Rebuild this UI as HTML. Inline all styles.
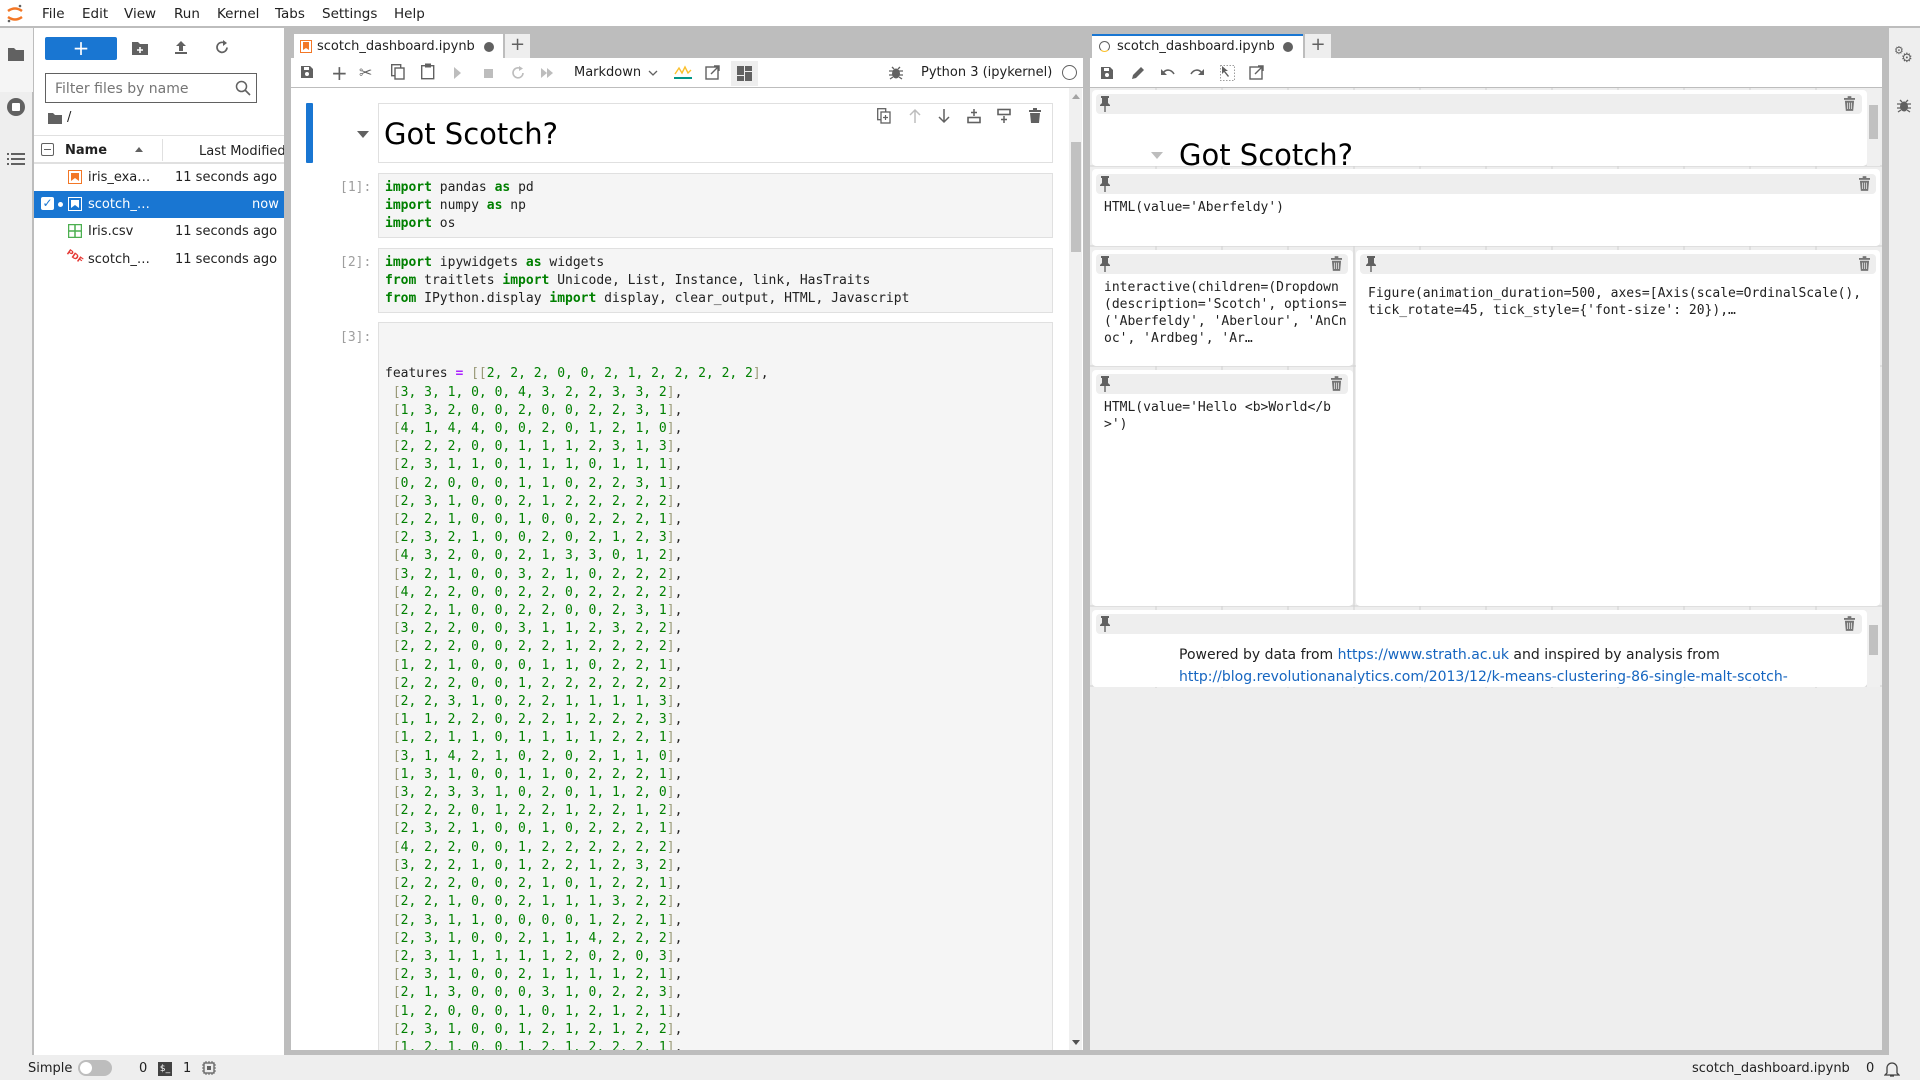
<!DOCTYPE html>
<html><head><meta charset="utf-8">
<style>
*{box-sizing:border-box;margin:0;padding:0}
body{width:1920px;height:1080px;overflow:hidden;background:#bdbdbd;font-family:"DejaVu Sans","Liberation Sans",sans-serif;font-size:13px;color:#212121;position:relative}
.a{position:absolute}
.mono{font-family:"DejaVu Sans Mono","Liberation Mono",monospace}
.menu{left:0;top:0;width:1920px;height:27px;background:#fff;border-bottom:1px solid #bdbdbd}
.menu span{position:absolute;top:6px;font-size:13.5px}
.k{color:#008000;font-weight:bold}
.n{color:#008000}
.b{color:#999977}
.p{color:#aa22ff;font-weight:bold}
.code{font-size:13px;line-height:18.2px;white-space:pre}
.cell{background:#f5f5f5;border:1px solid #e0e0e0}
.prompt{color:#9e9e9e;font-size:13px}
.card{background:#fff;border-radius:4px}
.hdr{background:#eeeeee;border-radius:4px;height:20px}
.ico{position:absolute}
.t{font-size:13px}
</style></head><body>

<div class="a menu">
 <svg class="ico" style="left:5px;top:3px" width="20" height="21" viewBox="0 0 20 21"><path d="M3 8 Q10 3 17 8" stroke="#f37726" stroke-width="2.5" fill="none"/><path d="M3 14 Q10 19 17 14" stroke="#f37726" stroke-width="2.5" fill="none"/><circle cx="15" cy="3" r="1.3" fill="#616161"/><circle cx="4" cy="18" r="1.3" fill="#616161"/></svg>
 <span style="left:42px">File</span><span style="left:82px">Edit</span><span style="left:124px">View</span><span style="left:174px">Run</span><span style="left:217px">Kernel</span><span style="left:275px">Tabs</span><span style="left:322px">Settings</span><span style="left:394px">Help</span>
</div>

<div class="a" style="left:0;top:28px;width:33px;height:1027px;background:#eeeeee;border-right:1px solid #bdbdbd"></div>
<div class="a" style="left:0;top:28px;width:33px;height:64px;background:#f5f5f5"></div>
<svg class="ico" style="left:7px;top:46px" width="18" height="16"><path d="M1 2h6l2 2h8v11H1z" fill="#616161"/></svg>
<svg class="ico" style="left:6px;top:97px" width="20" height="20"><circle cx="10" cy="10" r="9" fill="#616161"/><rect x="6" y="6" width="8" height="8" rx="1" fill="#fff"/></svg>
<svg class="ico" style="left:7px;top:152px" width="18" height="15"><g fill="#616161"><rect x="0" y="1" width="2" height="2"/><rect x="4" y="1" width="14" height="2"/><rect x="0" y="6" width="2" height="2"/><rect x="4" y="6" width="14" height="2"/><rect x="0" y="11" width="2" height="2"/><rect x="4" y="11" width="14" height="2"/></g></svg>

<div class="a" style="left:34px;top:28px;width:250px;height:1027px;background:#fff"></div>
<div class="a" style="left:45px;top:37px;width:72px;height:23px;background:#1976d2;border-radius:2px;color:#fff;text-align:center;font-size:20px;line-height:22px">+</div>
<svg class="ico" style="left:132px;top:41px" width="16" height="14"><path d="M0 1h6l2 2h8v11H0z" fill="#616161"/><path d="M8 6v6M5 9h6" stroke="#fff" stroke-width="1.6"/></svg>
<svg class="ico" style="left:174px;top:40px" width="14" height="15"><path d="M7 1L2 6h3v5h4V6h3z" fill="#616161"/><rect x="1" y="12" width="12" height="2" fill="#616161"/></svg>
<svg class="ico" style="left:215px;top:40px" width="15" height="15"><path d="M12 7.5A5 5 0 1 1 9.5 3" stroke="#616161" stroke-width="1.7" fill="none"/><path d="M8 0l4 3-4 3z" fill="#616161"/></svg>
<div class="a" style="left:45px;top:73px;width:212px;height:30px;border:1px solid #616161;background:#fff"></div>
<div class="a" style="left:55px;top:81px;color:#757575;font-size:14px">Filter files by name</div>
<svg class="ico" style="left:235px;top:80px" width="16" height="16"><circle cx="6.5" cy="6.5" r="5" stroke="#616161" stroke-width="1.5" fill="none"/><path d="M10 10l5 5" stroke="#616161" stroke-width="1.6"/></svg>
<svg class="ico" style="left:48px;top:112px" width="14" height="12"><path d="M0 1h5l2 2h7v9H0z" fill="#616161"/></svg>
<div class="a" style="left:67px;top:110px;font-size:13px">/</div>
<div class="a" style="left:34px;top:135px;width:250px;height:29px;border-top:1px solid #e0e0e0;border-bottom:2px solid #e0e0e0"></div>
<div class="a" style="left:41px;top:143px;width:13px;height:13px;border:1px solid #616161;border-radius:2px"></div>
<div class="a" style="left:44px;top:149px;width:7px;height:1px;background:#616161"></div>
<div class="a t" style="left:65px;top:143px;font-weight:bold">Name</div>
<div class="a" style="left:135px;top:147px;width:0;height:0;border-left:4px solid transparent;border-right:4px solid transparent;border-bottom:5px solid #616161"></div>
<div class="a" style="left:162px;top:139px;width:1px;height:22px;background:#e0e0e0"></div>
<div class="a t" style="left:199px;top:144px;white-space:nowrap;width:85px;overflow:hidden">Last Modified</div>
<div class="a" style="left:34px;top:191px;width:250px;height:27px;background:#1976d2"></div>
<svg class="ico" style="left:68px;top:170px" width="14" height="14"><rect x="0.5" y="0.5" width="13" height="13" fill="none" stroke="#f37726"/><path d="M3 3h8v8l-4-3-4 3z" fill="#f37726"/></svg>
<div class="a t" style="left:88px;top:170px">iris_exa…</div><div class="a t" style="left:175px;top:170px">11 seconds ago</div>
<div class="a" style="left:41px;top:197px;width:13px;height:13px;background:#fff;border-radius:2px;color:#1976d2;font-size:12px;line-height:13px;text-align:center;font-weight:bold">✓</div>
<div class="a" style="left:58px;top:202px;width:5px;height:5px;border-radius:50%;background:#fff"></div>
<svg class="ico" style="left:68px;top:197px" width="14" height="14"><rect x="0.5" y="0.5" width="13" height="13" fill="none" stroke="#fff"/><path d="M3 3h8v8l-4-3-4 3z" fill="#fff"/></svg>
<div class="a t" style="left:88px;top:197px;color:#fff">scotch_…</div><div class="a t" style="left:252px;top:197px;color:#fff">now</div>
<svg class="ico" style="left:68px;top:224px" width="14" height="14"><rect x="0.5" y="0.5" width="13" height="13" fill="none" stroke="#4caf50" stroke-width="1.5"/><path d="M7 0v14M0 7h14" stroke="#4caf50" stroke-width="1.5"/></svg>
<div class="a t" style="left:88px;top:224px">Iris.csv</div><div class="a t" style="left:175px;top:224px">11 seconds ago</div>
<div class="a" style="left:66px;top:252px;font-size:8px;color:#e53935;font-weight:bold;transform:rotate(35deg)">PDF</div>
<div class="a t" style="left:88px;top:252px">scotch_…</div><div class="a t" style="left:175px;top:252px">11 seconds ago</div>

<!-- notebook panel -->
<div class="a" style="left:291px;top:34px;width:792px;height:1016px;background:#fff"></div>
<div class="a" style="left:291px;top:27px;width:792px;height:31px;background:#bdbdbd"></div>
<div class="a" style="left:294px;top:34px;width:209px;height:25px;background:#fff"></div>
<svg class="ico" style="left:300px;top:40px" width="12" height="13"><rect x="0.5" y="0.5" width="11" height="12" fill="none" stroke="#f37726"/><path d="M3 2h6v8l-3-2-3 2z" fill="#f37726"/></svg>
<div class="a t" style="left:317px;top:39px">scotch_dashboard.ipynb</div>
<div class="a" style="left:484px;top:42px;width:10px;height:10px;border-radius:50%;background:#616161"></div>
<div class="a" style="left:505px;top:34px;width:25px;height:24px;background:#eeeeee;color:#616161;font-size:18px;text-align:center;line-height:22px">+</div>
<div class="a" style="left:291px;top:58px;width:792px;height:30px;background:#fff;border-bottom:1px solid #bdbdbd"></div>
<svg class="ico" style="left:300px;top:65px" width="14" height="14"><path d="M1 1h9l3 3v9H1z" fill="#616161"/><rect x="4" y="2" width="5" height="3" fill="#fff"/><circle cx="7" cy="9" r="2" fill="#fff"/></svg>
<div class="a" style="left:331px;top:61px;font-size:20px;color:#616161">+</div>
<div class="a" style="left:359px;top:63px;font-size:16px;color:#616161">✂</div>
<svg class="ico" style="left:391px;top:64px" width="14" height="16"><rect x="0.7" y="0.7" width="9" height="11" fill="none" stroke="#616161" stroke-width="1.4"/><rect x="4" y="4" width="9" height="11" fill="#fff" stroke="#616161" stroke-width="1.4"/></svg>
<svg class="ico" style="left:421px;top:63px" width="14" height="17"><rect x="0.7" y="2.7" width="12" height="13" fill="none" stroke="#616161" stroke-width="1.4"/><rect x="4" y="0.5" width="6" height="4" fill="#616161"/></svg>
<div class="a" style="left:454px;top:67px;width:0;height:0;border-top:6px solid transparent;border-bottom:6px solid transparent;border-left:7px solid #bdbdbd"></div>
<div class="a" style="left:484px;top:69px;width:9px;height:9px;background:#bdbdbd"></div>
<svg class="ico" style="left:511px;top:66px" width="14" height="14"><path d="M12 7A5 5 0 1 1 9.5 2.5" stroke="#bdbdbd" stroke-width="1.6" fill="none"/><path d="M8 0l4 2.5-4 2.5z" fill="#bdbdbd"/></svg>
<div class="a" style="left:541px;top:68px;width:0;height:0;border-top:5px solid transparent;border-bottom:5px solid transparent;border-left:6px solid #bdbdbd"></div>
<div class="a" style="left:547px;top:68px;width:0;height:0;border-top:5px solid transparent;border-bottom:5px solid transparent;border-left:6px solid #bdbdbd"></div>
<div class="a t" style="left:574px;top:65px">Markdown</div>
<svg class="ico" style="left:648px;top:70px" width="10" height="7"><path d="M1 1l4 4 4-4" stroke="#616161" stroke-width="1.3" fill="none"/></svg>
<svg class="ico" style="left:674px;top:64px" width="18" height="16"><path d="M1 10l4-6 3 5 3-6 3 6 3-3" stroke="#fbc02d" stroke-width="1.4" fill="none"/><rect x="0" y="13" width="18" height="2" fill="#009688"/></svg>
<svg class="ico" style="left:705px;top:65px" width="15" height="15"><rect x="1" y="2" width="12" height="12" fill="none" stroke="#616161" stroke-width="1.4"/><path d="M6 9l8-8M9 1h5v5" stroke="#616161" stroke-width="1.4" fill="none"/></svg>
<div class="a" style="left:731px;top:61px;width:27px;height:25px;background:#eeeeee"></div>
<svg class="ico" style="left:737px;top:66px" width="15" height="15"><rect x="0" y="0" width="7" height="9" fill="#616161"/><rect x="8" y="0" width="7" height="5" fill="#616161"/><rect x="8" y="6" width="7" height="9" fill="#616161"/><rect x="0" y="10" width="7" height="5" fill="#616161"/></svg>
<svg class="ico" style="left:889px;top:65px" width="14" height="15"><ellipse cx="7" cy="8.5" rx="4" ry="5" fill="#616161"/><path d="M0 6h14M0 10h14M1 14l3-2M13 14l-3-2M3 2l2 2M11 2l-2 2" stroke="#616161" stroke-width="1.3"/></svg>
<div class="a t" style="left:921px;top:65px">Python 3 (ipykernel)</div>
<div class="a" style="left:1062px;top:65px;width:15px;height:15px;border:1.5px solid #616161;border-radius:50%"></div>

<div class="a" style="left:1069px;top:88px;width:13px;height:962px;background:#f0f0f0"></div>
<div class="a" style="left:1071px;top:142px;width:10px;height:110px;background:#c1c1c1"></div>
<div class="a" style="left:1072px;top:94px;width:0;height:0;border-left:4px solid transparent;border-right:4px solid transparent;border-bottom:5px solid #a3a3a3"></div>
<div class="a" style="left:1072px;top:1040px;width:0;height:0;border-left:4px solid transparent;border-right:4px solid transparent;border-top:5px solid #505050"></div>

<div class="a" style="left:306px;top:103px;width:7px;height:60px;background:#1976d2;border-radius:1px"></div>
<div class="a" style="left:357px;top:131px;width:0;height:0;border-left:6px solid transparent;border-right:6px solid transparent;border-top:7px solid #616161"></div>
<div class="a" style="left:378px;top:103px;width:675px;height:60px;border:1px solid #e0e0e0;background:#fff"></div>
<div class="a" style="left:384px;top:117px;font-size:29px;color:#000">Got Scotch?</div>
<svg class="ico" style="left:877px;top:108px" width="14" height="16"><rect x="0.7" y="0.7" width="8" height="11" fill="none" stroke="#616161" stroke-width="1.3"/><rect x="4" y="4" width="9" height="11" fill="#fff" stroke="#616161" stroke-width="1.3"/><path d="M8.5 7v5M6 9.5h5" stroke="#616161" stroke-width="1.2"/></svg>
<svg class="ico" style="left:908px;top:108px" width="14" height="16"><path d="M7 15V2M2 7l5-5 5 5" stroke="#bdbdbd" stroke-width="1.5" fill="none"/></svg>
<svg class="ico" style="left:937px;top:108px" width="14" height="16"><path d="M7 1v13M2 9l5 5 5-5" stroke="#616161" stroke-width="1.5" fill="none"/></svg>
<svg class="ico" style="left:967px;top:108px" width="14" height="16"><path d="M7 1v7M4 4.5h6" stroke="#616161" stroke-width="1.5"/><rect x="1" y="9.5" width="12" height="5" fill="none" stroke="#616161" stroke-width="1.6"/></svg>
<svg class="ico" style="left:997px;top:108px" width="14" height="16"><rect x="1" y="1.5" width="12" height="5" fill="none" stroke="#616161" stroke-width="1.6"/><path d="M7 8v7M4 11.5h6" stroke="#616161" stroke-width="1.5"/></svg>
<svg class="ico" style="left:1029px;top:108px" width="12" height="16"><rect x="0" y="2" width="12" height="2" fill="#616161"/><rect x="4" y="0" width="4" height="2" fill="#616161"/><path d="M1 5h10l-1 10H2z" fill="#616161"/></svg>

<div class="a prompt mono" style="left:340px;top:180px">[1]:</div>
<div class="a cell" style="left:378px;top:173px;width:675px;height:65px"></div>
<div class="a code mono" style="left:385px;top:179px"><span class="k">import</span> pandas <span class="k">as</span> pd
<span class="k">import</span> numpy <span class="k">as</span> np
<span class="k">import</span> os</div>

<div class="a prompt mono" style="left:340px;top:255px">[2]:</div>
<div class="a cell" style="left:378px;top:248px;width:675px;height:65px"></div>
<div class="a code mono" style="left:385px;top:254px"><span class="k">import</span> ipywidgets <span class="k">as</span> widgets
<span class="k">from</span> traitlets <span class="k">import</span> Unicode, List, Instance, link, HasTraits
<span class="k">from</span> IPython.display <span class="k">import</span> display, clear_output, HTML, Javascript</div>

<div class="a prompt mono" style="left:340px;top:330px">[3]:</div>
<div class="a cell" style="left:378px;top:322px;width:675px;height:740px"></div>
<div class="a code mono" style="left:385px;top:329px">

features <span class="p">=</span> <span class="b">[[</span><span class="n">2, 2, 2, 0, 0, 2, 1, 2, 2, 2, 2, 2</span><span class="b">]</span>,
 <span class="b">[</span><span class="n">3, 3, 1, 0, 0, 4, 3, 2, 2, 3, 3, 2</span><span class="b">]</span>,
 <span class="b">[</span><span class="n">1, 3, 2, 0, 0, 2, 0, 0, 2, 2, 3, 1</span><span class="b">]</span>,
 <span class="b">[</span><span class="n">4, 1, 4, 4, 0, 0, 2, 0, 1, 2, 1, 0</span><span class="b">]</span>,
 <span class="b">[</span><span class="n">2, 2, 2, 0, 0, 1, 1, 1, 2, 3, 1, 3</span><span class="b">]</span>,
 <span class="b">[</span><span class="n">2, 3, 1, 1, 0, 1, 1, 1, 0, 1, 1, 1</span><span class="b">]</span>,
 <span class="b">[</span><span class="n">0, 2, 0, 0, 0, 1, 1, 0, 2, 2, 3, 1</span><span class="b">]</span>,
 <span class="b">[</span><span class="n">2, 3, 1, 0, 0, 2, 1, 2, 2, 2, 2, 2</span><span class="b">]</span>,
 <span class="b">[</span><span class="n">2, 2, 1, 0, 0, 1, 0, 0, 2, 2, 2, 1</span><span class="b">]</span>,
 <span class="b">[</span><span class="n">2, 3, 2, 1, 0, 0, 2, 0, 2, 1, 2, 3</span><span class="b">]</span>,
 <span class="b">[</span><span class="n">4, 3, 2, 0, 0, 2, 1, 3, 3, 0, 1, 2</span><span class="b">]</span>,
 <span class="b">[</span><span class="n">3, 2, 1, 0, 0, 3, 2, 1, 0, 2, 2, 2</span><span class="b">]</span>,
 <span class="b">[</span><span class="n">4, 2, 2, 0, 0, 2, 2, 0, 2, 2, 2, 2</span><span class="b">]</span>,
 <span class="b">[</span><span class="n">2, 2, 1, 0, 0, 2, 2, 0, 0, 2, 3, 1</span><span class="b">]</span>,
 <span class="b">[</span><span class="n">3, 2, 2, 0, 0, 3, 1, 1, 2, 3, 2, 2</span><span class="b">]</span>,
 <span class="b">[</span><span class="n">2, 2, 2, 0, 0, 2, 2, 1, 2, 2, 2, 2</span><span class="b">]</span>,
 <span class="b">[</span><span class="n">1, 2, 1, 0, 0, 0, 1, 1, 0, 2, 2, 1</span><span class="b">]</span>,
 <span class="b">[</span><span class="n">2, 2, 2, 0, 0, 1, 2, 2, 2, 2, 2, 2</span><span class="b">]</span>,
 <span class="b">[</span><span class="n">2, 2, 3, 1, 0, 2, 2, 1, 1, 1, 1, 3</span><span class="b">]</span>,
 <span class="b">[</span><span class="n">1, 1, 2, 2, 0, 2, 2, 1, 2, 2, 2, 3</span><span class="b">]</span>,
 <span class="b">[</span><span class="n">1, 2, 1, 1, 0, 1, 1, 1, 1, 2, 2, 1</span><span class="b">]</span>,
 <span class="b">[</span><span class="n">3, 1, 4, 2, 1, 0, 2, 0, 2, 1, 1, 0</span><span class="b">]</span>,
 <span class="b">[</span><span class="n">1, 3, 1, 0, 0, 1, 1, 0, 2, 2, 2, 1</span><span class="b">]</span>,
 <span class="b">[</span><span class="n">3, 2, 3, 3, 1, 0, 2, 0, 1, 1, 2, 0</span><span class="b">]</span>,
 <span class="b">[</span><span class="n">2, 2, 2, 0, 1, 2, 2, 1, 2, 2, 1, 2</span><span class="b">]</span>,
 <span class="b">[</span><span class="n">2, 3, 2, 1, 0, 0, 1, 0, 2, 2, 2, 1</span><span class="b">]</span>,
 <span class="b">[</span><span class="n">4, 2, 2, 0, 0, 1, 2, 2, 2, 2, 2, 2</span><span class="b">]</span>,
 <span class="b">[</span><span class="n">3, 2, 2, 1, 0, 1, 2, 2, 1, 2, 3, 2</span><span class="b">]</span>,
 <span class="b">[</span><span class="n">2, 2, 2, 0, 0, 2, 1, 0, 1, 2, 2, 1</span><span class="b">]</span>,
 <span class="b">[</span><span class="n">2, 2, 1, 0, 0, 2, 1, 1, 1, 3, 2, 2</span><span class="b">]</span>,
 <span class="b">[</span><span class="n">2, 3, 1, 1, 0, 0, 0, 0, 1, 2, 2, 1</span><span class="b">]</span>,
 <span class="b">[</span><span class="n">2, 3, 1, 0, 0, 2, 1, 1, 4, 2, 2, 2</span><span class="b">]</span>,
 <span class="b">[</span><span class="n">2, 3, 1, 1, 1, 1, 1, 2, 0, 2, 0, 3</span><span class="b">]</span>,
 <span class="b">[</span><span class="n">2, 3, 1, 0, 0, 2, 1, 1, 1, 1, 2, 1</span><span class="b">]</span>,
 <span class="b">[</span><span class="n">2, 1, 3, 0, 0, 0, 3, 1, 0, 2, 2, 3</span><span class="b">]</span>,
 <span class="b">[</span><span class="n">1, 2, 0, 0, 0, 1, 0, 1, 2, 1, 2, 1</span><span class="b">]</span>,
 <span class="b">[</span><span class="n">2, 3, 1, 0, 0, 1, 2, 1, 2, 1, 2, 2</span><span class="b">]</span>,
 <span class="b">[</span><span class="n">1, 2, 1, 0, 0, 1, 2, 1, 2, 2, 2, 1</span><span class="b">]</span>,</div>
<div class="a" style="left:284px;top:1050px;width:1636px;height:5px;background:#bdbdbd"></div>

<!-- right panel -->
<div class="a" style="left:1090px;top:27px;width:792px;height:31px;background:#bdbdbd"></div>
<div class="a" style="left:1092px;top:34px;width:211px;height:25px;background:#fff;border-top:2px solid #1976d2"></div>
<div class="a" style="left:1099px;top:41px;width:11px;height:11px;border:1.3px solid #616161;border-radius:50%;border-bottom-color:#fbc02d"></div>
<div class="a t" style="left:1117px;top:39px">scotch_dashboard.ipynb</div>
<div class="a" style="left:1283px;top:42px;width:10px;height:10px;border-radius:50%;background:#616161"></div>
<div class="a" style="left:1305px;top:34px;width:26px;height:24px;background:#eeeeee;color:#616161;font-size:18px;text-align:center;line-height:22px">+</div>
<div class="a" style="left:1090px;top:58px;width:792px;height:30px;background:#fff;border-bottom:1px solid #bdbdbd"></div>
<svg class="ico" style="left:1100px;top:66px" width="14" height="14"><path d="M1 1h9l3 3v9H1z" fill="#616161"/><rect x="4" y="2" width="5" height="3" fill="#fff"/><circle cx="7" cy="9" r="2" fill="#fff"/></svg>
<svg class="ico" style="left:1130px;top:66px" width="14" height="14"><path d="M2 13l1-4 8-8 3 3-8 8z" fill="#616161"/></svg>
<svg class="ico" style="left:1160px;top:67px" width="15" height="12"><path d="M3 6c3-4 8-4 11 1" stroke="#616161" stroke-width="1.6" fill="none"/><path d="M1 2v6h6z" fill="#616161"/></svg>
<svg class="ico" style="left:1190px;top:67px" width="15" height="12"><path d="M12 6c-3-4-8-4-11 1" stroke="#616161" stroke-width="1.6" fill="none"/><path d="M14 2v6H8z" fill="#616161"/></svg>
<svg class="ico" style="left:1220px;top:65px" width="15" height="16"><rect x="0.5" y="0.5" width="14" height="15" fill="none" stroke="#9e9e9e" stroke-dasharray="1.5 1.5"/><path d="M2 1v8l2-2 4 5 1-1-4-5h3z" fill="#616161"/></svg>
<svg class="ico" style="left:1249px;top:65px" width="15" height="15"><rect x="1" y="2" width="12" height="12" fill="none" stroke="#616161" stroke-width="1.4"/><path d="M6 9l8-8M9 1h5v5" stroke="#616161" stroke-width="1.4" fill="none"/></svg>

<div class="a" style="left:1090px;top:88px;width:792px;height:962px;background:#eeeeee"></div>
<svg class="a" style="left:1090px;top:88px" width="792" height="600"><g stroke="#d0d0d0" stroke-width="1"><path d="M66 0v600M132 0v600M198 0v600M264 0v600M330 0v600M396 0v600M462 0v600M528 0v600M594 0v600M660 0v600M726 0v600"/><path d="M0 78h792M0 158h792M0 278h792M0 518h792M0 598h792"/></g></svg>

<div class="a card" style="left:1092px;top:90px;width:775px;height:76px"></div>
<div class="a hdr" style="left:1096px;top:94px;width:766px"></div>
<div class="a" style="left:1151px;top:152px;width:0;height:0;border-left:6px solid transparent;border-right:6px solid transparent;border-top:7px solid #bdbdbd"></div>
<div class="a" style="left:1179px;top:136px;font-size:29px;color:#000;height:30px;overflow:hidden;line-height:38px">Got Scotch?</div>
<div class="a" style="left:1867px;top:90px;width:13px;height:76px;background:#f0f0f0"></div>
<div class="a" style="left:1869px;top:105px;width:9px;height:34px;background:#c1c1c1"></div>
<div class="a card" style="left:1092px;top:169px;width:788px;height:77px"></div>
<div class="a hdr" style="left:1096px;top:174px;width:780px"></div>
<div class="a mono" style="left:1104px;top:200px;font-size:13px">HTML(value='Aberfeldy')</div>
<div class="a card" style="left:1092px;top:250px;width:261px;height:116px"></div>
<div class="a hdr" style="left:1096px;top:254px;width:252px"></div>
<div class="a mono" style="left:1104px;top:279px;font-size:13px;line-height:17px;white-space:pre">interactive(children=(Dropdown
(description='Scotch', options=
('Aberfeldy', 'Aberlour', 'AnCn
oc', 'Ardbeg', 'Ar…</div>
<div class="a card" style="left:1356px;top:250px;width:524px;height:356px"></div>
<div class="a hdr" style="left:1360px;top:254px;width:516px"></div>
<div class="a mono" style="left:1368px;top:285px;font-size:13px;line-height:17px;white-space:pre">Figure(animation_duration=500, axes=[Axis(scale=OrdinalScale(),
tick_rotate=45, tick_style={'font-size': 20}),…</div>
<div class="a card" style="left:1092px;top:370px;width:261px;height:236px"></div>
<div class="a hdr" style="left:1096px;top:374px;width:252px"></div>
<div class="a mono" style="left:1104px;top:399px;font-size:13px;line-height:17px;white-space:pre">HTML(value='Hello &lt;b&gt;World&lt;/b
&gt;')</div>
<div class="a card" style="left:1092px;top:610px;width:775px;height:77px"></div>
<div class="a hdr" style="left:1096px;top:614px;width:766px"></div>
<div class="a" style="left:1179px;top:647px;font-size:14px;white-space:nowrap">Powered by data from <span style="color:#1565c0">https://www.strath.ac.uk</span> and inspired by analysis from</div>
<div class="a" style="left:1179px;top:669px;font-size:14px;white-space:nowrap;color:#1565c0;height:18px;overflow:hidden">http://blog.revolutionanalytics.com/2013/12/k-means-clustering-86-single-malt-scotch-</div>
<div class="a" style="left:1867px;top:610px;width:13px;height:77px;background:#f0f0f0"></div>
<div class="a" style="left:1869px;top:625px;width:9px;height:30px;background:#c1c1c1"></div>

<svg width="0" height="0" style="position:absolute"><defs>
<symbol id="pin" viewBox="0 0 12 16"><rect x="2" y="0" width="8" height="2" fill="#616161"/><path d="M3 2h6v5l2 2v1H1V9l2-2z" fill="#616161"/><rect x="5.3" y="10" width="1.4" height="6" fill="#616161"/></symbol>
<symbol id="tr" viewBox="0 0 12 16"><rect x="0" y="2" width="12" height="2" fill="#757575"/><rect x="4" y="0" width="4" height="2" fill="#757575"/><path d="M1 5h10l-1 11H2z" fill="#757575"/><path d="M4 7v7M6 7v7M8 7v7" stroke="#fff" stroke-width="0.7"/></symbol>
</defs></svg>
<svg class="ico" style="left:1099px;top:96px" width="12" height="16"><use href="#pin"/></svg>
<svg class="ico" style="left:1844px;top:96px" width="11" height="15"><use href="#tr"/></svg>
<svg class="ico" style="left:1099px;top:176px" width="12" height="16"><use href="#pin"/></svg>
<svg class="ico" style="left:1859px;top:176px" width="11" height="15"><use href="#tr"/></svg>
<svg class="ico" style="left:1099px;top:256px" width="12" height="16"><use href="#pin"/></svg>
<svg class="ico" style="left:1331px;top:256px" width="11" height="15"><use href="#tr"/></svg>
<svg class="ico" style="left:1365px;top:256px" width="12" height="16"><use href="#pin"/></svg>
<svg class="ico" style="left:1859px;top:256px" width="11" height="15"><use href="#tr"/></svg>
<svg class="ico" style="left:1099px;top:376px" width="12" height="16"><use href="#pin"/></svg>
<svg class="ico" style="left:1331px;top:376px" width="11" height="15"><use href="#tr"/></svg>
<svg class="ico" style="left:1099px;top:616px" width="12" height="16"><use href="#pin"/></svg>
<svg class="ico" style="left:1844px;top:616px" width="11" height="15"><use href="#tr"/></svg>

<div class="a" style="left:1888px;top:28px;width:32px;height:1027px;background:#eeeeee;border-left:1px solid #bdbdbd"></div>
<div class="a" style="left:1894px;top:44px;font-size:11px;color:#616161">⚙</div>
<div class="a" style="left:1901px;top:51px;font-size:13px;color:#616161">⚙</div>
<svg class="ico" style="left:1897px;top:98px" width="14" height="15"><ellipse cx="7" cy="8.5" rx="4" ry="5" fill="#616161"/><path d="M0 6h14M0 10h14M1 14l3-2M13 14l-3-2M3 2l2 2M11 2l-2 2" stroke="#616161" stroke-width="1.3"/></svg>

<div class="a" style="left:0;top:1055px;width:1920px;height:25px;background:#eeeeee"></div>
<div class="a t" style="left:28px;top:1061px">Simple</div>
<div class="a" style="left:78px;top:1060px;width:34px;height:16px;border-radius:8px;background:#bdbdbd"></div>
<div class="a" style="left:80px;top:1062px;width:12px;height:12px;border-radius:50%;background:#fff"></div>
<div class="a t" style="left:139px;top:1061px">0</div>
<div class="a" style="left:158px;top:1062px;width:14px;height:14px;background:#424242;color:#fff;font-size:9px;line-height:14px;text-align:center">$_</div>
<div class="a t" style="left:183px;top:1061px">1</div>
<svg class="ico" style="left:202px;top:1061px" width="14" height="14"><rect x="2" y="2" width="10" height="10" fill="none" stroke="#616161" stroke-width="1.3"/><rect x="5" y="5" width="4" height="4" fill="#616161"/><path d="M4 0v2M7 0v2M10 0v2M4 12v2M7 12v2M10 12v2M0 4h2M0 7h2M0 10h2M12 4h2M12 7h2M12 10h2" stroke="#616161"/></svg>
<div class="a t" style="left:1692px;top:1061px">scotch_dashboard.ipynb</div>
<div class="a t" style="left:1866px;top:1061px">0</div>
<svg class="ico" style="left:1884px;top:1060px" width="16" height="18"><path d="M3 13V8a5 5 0 0 1 10 0v5l2 2H1z" fill="none" stroke="#424242" stroke-width="1.3"/><path d="M6 16h4" stroke="#424242" stroke-width="1.3"/></svg>
</body></html>
